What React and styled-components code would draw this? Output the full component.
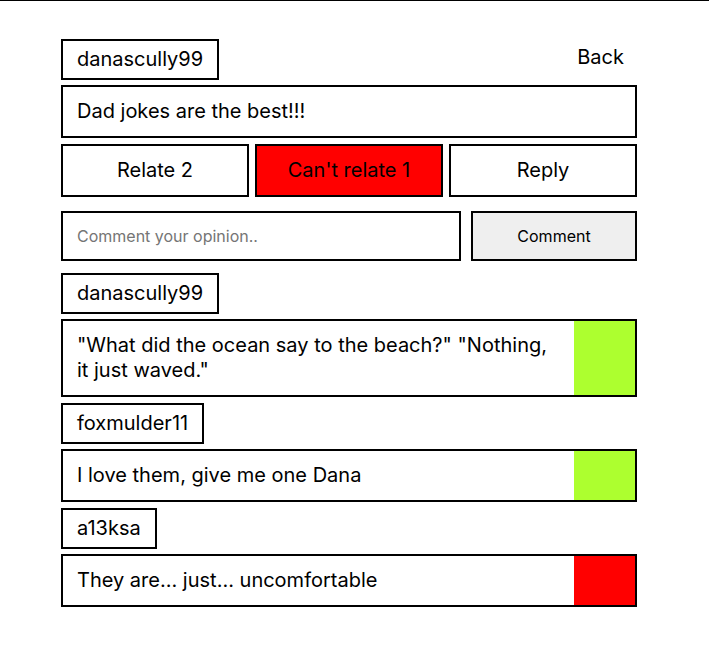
import React from "react";
import styled, { createGlobalStyle } from "styled-components";

const Global = createGlobalStyle`
  html, body { margin: 0; padding: 0; background: #fff; }
  body { font-family: Inter, "Noto Sans", sans-serif; color: #000; }
  * { box-sizing: border-box; }
`;

const Page = styled.div`
  border-top: 1px solid #000;
  min-height: 670px;
`;

const Column = styled.main`
  width: 576px;
  margin: 38px 0 0 61px;
  display: flex;
  flex-direction: column;
`;

const Header = styled.div`
  display: flex;
  justify-content: space-between;
  align-items: flex-start;
`;

const UserTag = styled.div`
  align-self: flex-start;
  border: 2px solid #000;
  padding: 6px 14px;
  font-size: 20px;
  line-height: 25px;
`;

const BackButton = styled.button`
  background: none;
  border: none;
  font-family: inherit;
  font-size: 20px;
  line-height: 25px;
  color: #000;
  padding: 6px 13px 0;
  cursor: pointer;
`;

const Post = styled.div`
  margin-top: 5px;
  border: 2px solid #000;
  padding: 12px 14px;
  font-size: 20px;
  line-height: 25px;
`;

const Actions = styled.div`
  margin-top: 6px;
  display: grid;
  grid-template-columns: repeat(3, 1fr);
  gap: 6px;
`;

const ActionButton = styled.button`
  border: 2px solid #000;
  background: ${(p) => p.$bg || "#fff"};
  font-family: inherit;
  font-size: 20px;
  line-height: 25px;
  color: #000;
  padding: 12px 0;
  cursor: pointer;
`;

const CommentForm = styled.form`
  margin-top: 14px;
  display: flex;
  gap: 10px;
  height: 50px;
`;

const CommentInput = styled.input`
  flex: 1;
  border: 2px solid #000;
  padding: 0 14px;
  font-family: inherit;
  font-size: 16px;
  outline: none;
  &::placeholder { color: #757575; }
`;

const SubmitButton = styled.button`
  width: 166px;
  border: 2px solid #000;
  background: #efefef;
  font-family: inherit;
  font-size: 16px;
  color: #000;
  cursor: pointer;
`;

const Comments = styled.div`
  margin-top: 12px;
  display: flex;
  flex-direction: column;
`;

const CommentBox = styled.div`
  margin-top: 5px;
  margin-bottom: 6px;
  border: 2px solid #000;
  display: flex;
  align-items: stretch;
`;

const CommentText = styled.p`
  flex: 1;
  margin: 0;
  padding: 12px 14px;
  font-size: 20px;
  line-height: 25px;
`;

const Mood = styled.div`
  width: 61px;
  flex: none;
  background: ${(p) => (p.$relate ? "#adff2f" : "#ff0000")};
`;

const comments = [
  { user: "danascully99", text: "\"What did the ocean say to the beach?\" \"Nothing, it just waved.\"", relate: true },
  { user: "foxmulder11", text: "I love them, give me one Dana", relate: true },
  { user: "a13ksa", text: "They are... just... uncomfortable", relate: false },
];

export default function App() {
  return (
    <Page>
      <Global />
      <Column>
        <Header>
          <UserTag>danascully99</UserTag>
          <BackButton>Back</BackButton>
        </Header>
        <Post>Dad jokes are the best!!!</Post>
        <Actions>
          <ActionButton>Relate 2</ActionButton>
          <ActionButton $bg="#ff0000">Can't relate 1</ActionButton>
          <ActionButton>Reply</ActionButton>
        </Actions>
        <CommentForm onSubmit={(e) => e.preventDefault()}>
          <CommentInput placeholder="Comment your opinion.." />
          <SubmitButton type="submit">Comment</SubmitButton>
        </CommentForm>
        <Comments>
          {comments.map((c, i) => (
            <React.Fragment key={i}>
              <UserTag>{c.user}</UserTag>
              <CommentBox>
                <CommentText>{c.text}</CommentText>
                <Mood $relate={c.relate} />
              </CommentBox>
            </React.Fragment>
          ))}
        </Comments>
      </Column>
    </Page>
  );
}
